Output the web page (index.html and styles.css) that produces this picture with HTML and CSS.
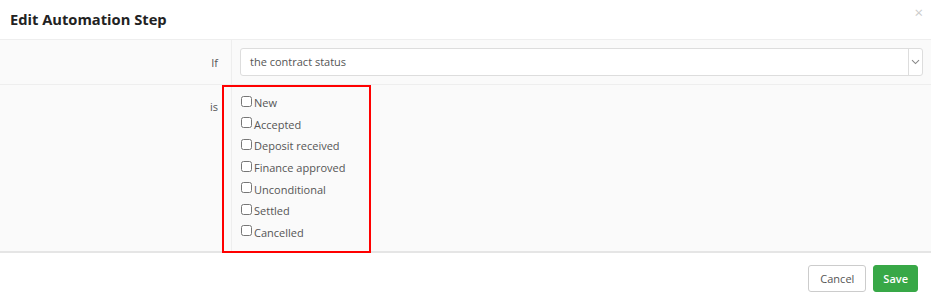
FILE: index.html
```html
<!DOCTYPE html>
<html lang="en">
<head>
    <meta charset="UTF-8">
    <title>Edit Automation Step</title>
    <link rel="stylesheet" href="styles.css">
</head>
<body>
    <div class="modal">
        <div class="modal-header">
            <h4>Edit Automation Step</h4>
            <span class="close">&times;</span>
        </div>

        <div class="modal-body">
            <div class="row">
                <label class="row-label">If</label>
                <div class="row-field">
                    <div class="select">
                        <span class="select-text">the contract status</span>
                        <span class="select-arrow">
                            <svg width="9" height="6" viewBox="0 0 9 6"><path d="M1 1.2 L4.5 4.6 L8 1.2" fill="none" stroke="#888" stroke-width="1.1"/></svg>
                        </span>
                    </div>
                </div>
            </div>
            <div class="row">
                <label class="row-label">is</label>
                <div class="row-field checks">
                    <label class="check"><input type="checkbox"> New</label>
                    <label class="check"><input type="checkbox"> Accepted</label>
                    <label class="check"><input type="checkbox"> Deposit received</label>
                    <label class="check"><input type="checkbox"> Finance approved</label>
                    <label class="check"><input type="checkbox"> Unconditional</label>
                    <label class="check"><input type="checkbox"> Settled</label>
                    <label class="check"><input type="checkbox"> Cancelled</label>
                    <!-- highlight box around the options -->
                    <div class="highlight"></div>
                </div>
            </div>
        </div>

        <div class="modal-footer">
            <button class="btn btn-default">Cancel</button>
            <button class="btn btn-success">Save</button>
        </div>
    </div>
</body>
</html>
```

FILE: styles.css
```css
body {
    margin: 0;
    font-family: "Open Sans", Arial, sans-serif;
    font-size: 11px;
    color: #333;
    background-color: #fff;
}

.modal {
    width: 931px;
}

.modal-header {
    height: 39px;
    padding: 0 10px;
    display: flex;
    align-items: center;
    justify-content: space-between;
    border-bottom: 1px solid #eee;
}

.modal-header h4 {
    margin: 0;
    font-size: 14.7px;
    font-weight: bold;
    color: #222;
    position: relative;
    top: -1px;
}

.close {
    font-size: 15px;
    color: #ccc;
    position: relative;
    top: -8px;
    right: -2px;
}

.modal-body {
    background-color: #fafafa;
}

.row {
    display: flex;
    border-bottom: 1px solid #eee;
}

.row:last-child {
    border-bottom: 2px solid #e5e5e5;
}

.row-label {
    width: 218px;
    padding-right: 13px;
    text-align: right;
    border-right: 1px solid #eee;
    color: #555;
    padding-top: 15px;
}

.row:last-child .row-label {
    padding-top: 14px;
}

.row-field {
    flex: 1;
    padding: 8px 8px 8px 8px;
}

.select {
    display: flex;
    height: 26px;
    border: 1px solid #ddd;
    border-radius: 3px;
    background-color: #fff;
}

.select-text {
    flex: 1;
    padding-left: 9px;
    line-height: 26px;
    color: #555;
}

.select-arrow {
    width: 13px;
    border-left: 1px solid #ddd;
    display: flex;
    align-items: center;
    justify-content: center;
}

.checks {
    position: relative;
    padding: 7px 8px 8px 8px;
}

.check {
    display: flex;
    align-items: center;
    height: 21.6px;
    color: #555;
}

.check input {
    margin: 0 2px 3px 1px;
    width: 11px;
    height: 11px;
}

.highlight {
    position: absolute;
    left: -10px;
    top: 0;
    width: 145px;
    bottom: -2px;
    border: 2px solid #f00;
}

.modal-footer {
    display: flex;
    justify-content: flex-end;
    gap: 7px;
    padding: 12px 13px 0 0;
}

.btn {
    height: 27px;
    border-radius: 3px;
    font-family: "Open Sans", Arial, sans-serif;
    font-size: 11px;
    padding: 0 11px;
    cursor: pointer;
}

.btn-default {
    background-color: #fff;
    border: 1px solid #ccc;
    color: #555;
}

.btn-success {
    background-color: #38a847;
    border: 1px solid #38a847;
    color: #fff;
    font-weight: 600;
    padding: 0 9px;
}
```
